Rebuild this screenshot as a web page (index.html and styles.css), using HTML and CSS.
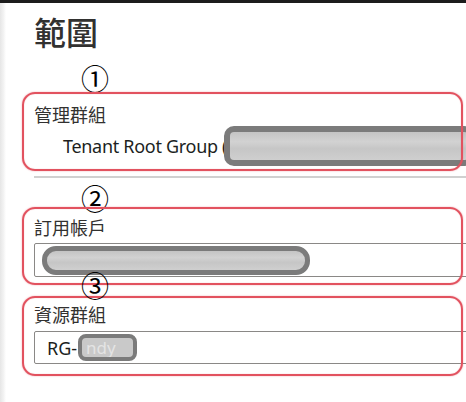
FILE: index.html
```html
<!DOCTYPE html>
<html lang="zh-Hant">
<head>
<meta charset="utf-8">
<link rel="stylesheet" href="styles.css">
</head>
<body>
<div class="topbar"></div>
<div class="page">
  <div class="edge"></div>
  <main class="main">
    <h1 class="title">範圍</h1>

    <div class="num num-1">①</div>
    <section class="field field-1">
      <div class="label">管理群組</div>
      <div class="value-row">
        <span class="value-text">Tenant Root Group (</span>
        <span class="blob blob-1"></span>
      </div>
    </section>
    <div class="divider"></div>

    <div class="num num-2">②</div>
    <section class="field field-2">
      <div class="label">訂用帳戶</div>
      <div class="input input-2">
        <span class="blob blob-2"></span>
      </div>
    </section>

    <div class="num num-3">③</div>
    <section class="field field-3">
      <div class="label">資源群組</div>
      <div class="input input-3">
        <span class="value-text">RG-</span>
        <span class="blob blob-3"><span class="blob-text">ndy</span></span>
      </div>
    </section>
  </main>
</div>
</body>
</html>
```

FILE: styles.css
```css
html, body {
  margin: 0;
  padding: 0;
  background: #ffffff;
  overflow: hidden;
}

body {
  width: 466px;
  height: 402px;
  font-family: "Noto Sans", "Noto Sans CJK TC", sans-serif;
  color: #323130;
}

.topbar {
  height: 3px;
  background: #1c1c1c;
}

.page {
  display: flex;
  height: 399px;
}

.edge {
  width: 6px;
  flex: none;
  background: linear-gradient(to right, #e6e6e6, #f3f3f3 60%, #ffffff);
}

.main {
  flex: 1;
  padding-left: 28px;
  min-width: 0;
}

.title {
  margin: 8px 0 0 0;
  font-family: "Noto Sans CJK TC", sans-serif;
  font-size: 32px;
  line-height: 40px;
  font-weight: 500;
  color: #323130;
}

.num {
  font-family: "Noto Sans CJK JP", sans-serif;
  font-size: 28px;
  line-height: 26px;
  height: 26px;
  color: #000;
  margin-left: 47px;
}

.num-1 { margin-top: 14px; }
.num-2 { margin-top: 7px; }
.num-3 { margin-top: -5px; position: relative; z-index: 2; height: 22px; line-height: 26px; }

.field {
  position: relative;
}

.field::before {
  content: "";
  position: absolute;
  left: -12px;
  right: 3px;
  border: 2.5px solid #e2525f;
  border-radius: 13px;
  box-shadow: 0 0 1.5px rgba(224, 70, 90, 0.6), inset 0 0 1px rgba(224, 70, 90, 0.5);
  pointer-events: none;
  z-index: 1;
}

.label {
  font-family: "Noto Sans CJK TC", sans-serif;
  font-size: 18px;
  line-height: 24px;
  height: 24px;
  color: #323130;
}

/* field 1 */
.field-1 { margin-top: 11px; }
.field-1::before { top: -10px; bottom: -5px; }

.value-row {
  display: flex;
  align-items: center;
  height: 40px;
  margin-top: 0;
  padding-left: 29px;
  white-space: nowrap;
}

.value-text {
  font-size: 18px;
  color: #201f1e;
  flex: none;
}

.value-row .value-text {
  letter-spacing: -0.3px;
}

.blob {
  flex: none;
  display: block;
  box-sizing: border-box;
  border: 6px solid #7b7b7b;
  background: linear-gradient(to bottom, #c4c4c4, #d2d2d2 35%, #c6c6c6 60%, #cfcfcf);
}

.blob-1 {
  width: 250px;
  height: 40px;
  border-radius: 10px;
  margin-left: -3px;
}

.divider {
  height: 2px;
  background: #d0d0d0;
  margin-top: 10px;
  margin-right: -10px;
}

/* field 2 */
.field-2 { margin-top: 4px; }
.field-2::before { top: -8px; bottom: -8px; }

.input {
  box-sizing: border-box;
  border: 1px solid #8a8886;
  border-radius: 2px;
  margin-right: -10px;
  display: flex;
  align-items: center;
}

.input-2 {
  height: 34px;
  margin-top: 4px;
  padding-left: 7px;
}

.blob-2 {
  width: 268px;
  height: 29px;
  border-width: 5px;
  border-radius: 14px;
}

/* field 3 */
.field-3 { margin-top: 8px; }
.field-3::before { top: -6px; bottom: -12px; }

.input-3 {
  height: 33px;
  margin-top: 5px;
  padding-left: 12px;
}

.blob-3 {
  width: 59px;
  height: 27px;
  border-width: 4px;
  border-radius: 8px;
  margin-left: 1px;
  background: #c9c9c9;
  overflow: hidden;
}

.blob-text {
  display: block;
  font-size: 17px;
  line-height: 19px;
  color: #e4e4e4;
  padding-left: 4px;
}
```
